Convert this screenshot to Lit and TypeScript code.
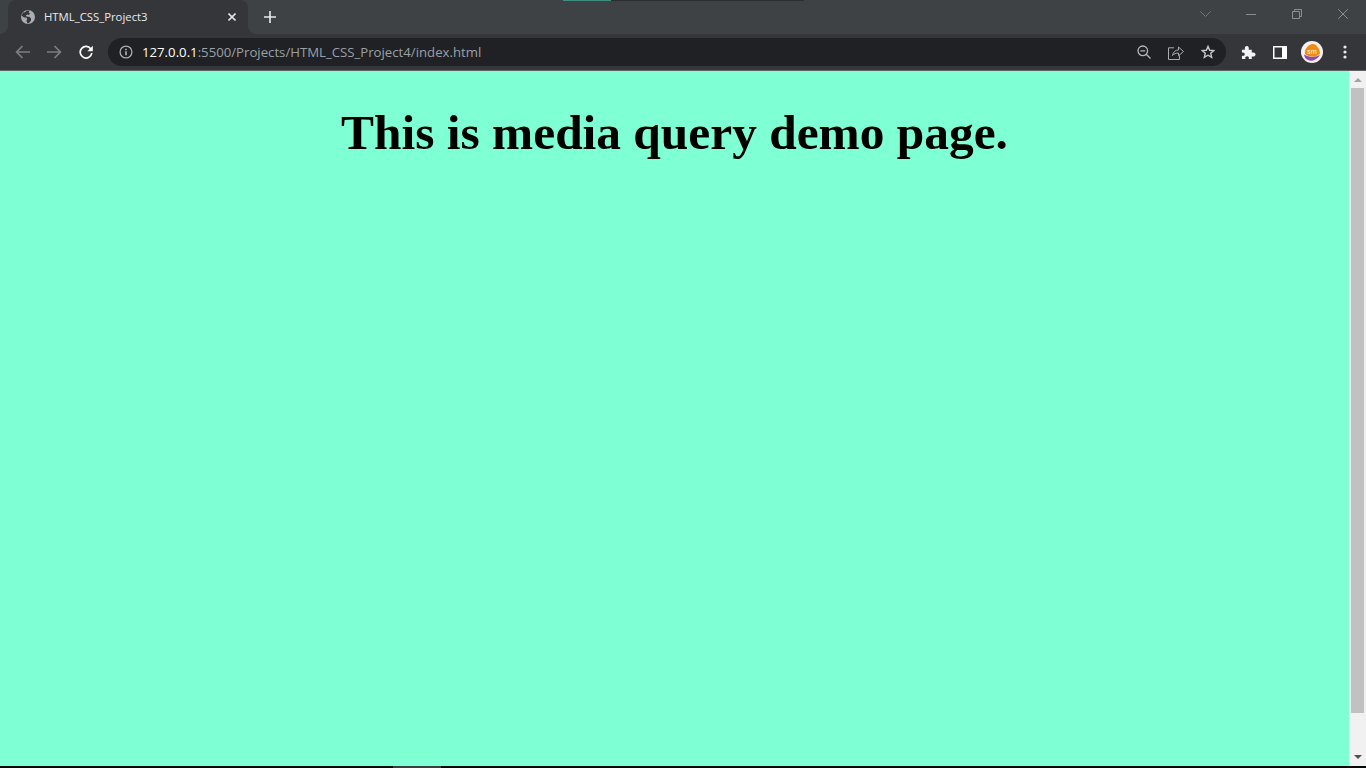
import { LitElement, css, html } from "lit";
import { customElement } from "lit/decorators.js";

@customElement("app-root")
export class AppRoot extends LitElement {
  static styles = css`
    :host {
      display: flex;
      flex-direction: column;
      width: 1366px;
      height: 768px;
      overflow: hidden;
      font-family: "Open Sans", "Liberation Sans", sans-serif;
      background: #000;
    }
    svg {
      display: block;
      flex: none;
    }

    .tabstrip {
      position: relative;
      display: flex;
      align-items: flex-end;
      height: 34px;
      flex: none;
      background: #3e4245;
    }
    .loadbar {
      position: absolute;
      top: 0;
      left: 563px;
      width: 241px;
      height: 1px;
      background: linear-gradient(to right, #3f8f80 48px, #2a2c2e 48px);
    }
    .tab {
      position: relative;
      display: flex;
      align-items: center;
      width: 240px;
      height: 34px;
      margin-left: 8px;
      padding: 0 12px 0 13px;
      box-sizing: border-box;
      background: #35363a;
      border-radius: 8px 8px 0 0;
      color: #e8eaed;
      font-size: 11.33px;
      flex: none;
    }
    .tab::before,
    .tab::after {
      content: "";
      position: absolute;
      bottom: 0;
      width: 8px;
      height: 8px;
    }
    .tab::before {
      left: -8px;
      background: radial-gradient(circle at 0 0, transparent 7.5px, #35363a 8px);
    }
    .tab::after {
      right: -8px;
      background: radial-gradient(circle at 100% 0, transparent 7.5px, #35363a 8px);
    }
    .tab-title {
      flex: 1;
      margin-left: 9px;
      margin-bottom: 1px;
      white-space: nowrap;
    }
    .newtab {
      margin-left: 16px;
      margin-bottom: 11px;
    }
    .winctl {
      display: flex;
      align-items: center;
      margin-left: auto;
      align-self: flex-start;
      height: 28px;
      padding-right: 18px;
      gap: 36px;
    }
    .winctl .chevron {
      margin-right: -1px;
    }

    .toolbar {
      display: flex;
      align-items: center;
      height: 37px;
      flex: none;
      background: #35363a;
      border-bottom: 1px solid #5f6368;
      box-sizing: border-box;
      padding-left: 15px;
    }
    .nav {
      display: flex;
      align-items: center;
      gap: 17px;
    }
    .omnibox {
      display: flex;
      align-items: center;
      width: 1118px;
      height: 28px;
      margin-left: 15px;
      padding: 0 11px;
      box-sizing: border-box;
      background: #202124;
      border-radius: 14px;
      font-size: 13.2px;
      color: #9aa0a6;
      flex: none;
    }
    .url {
      flex: 1;
      margin-left: 9px;
      white-space: nowrap;
    }
    .url b {
      font-weight: 400;
      color: #fff;
    }
    .omni-actions {
      display: flex;
      align-items: center;
      gap: 17px;
    }
    .extras {
      display: flex;
      align-items: center;
      margin-left: 15px;
    }
    .panel {
      margin-left: 17px;
    }
    .avatar {
      margin-left: 14px;
    }
    .dots {
      margin-left: 20px;
    }

    .body {
      display: flex;
      flex: none;
      height: 695px;
    }
    .page {
      flex: 1;
      background: #7fffd4;
      text-align: center;
      font-family: "Liberation Serif", "Times New Roman", serif;
      color: #000;
    }
    h1 {
      margin: 29px 0 0;
      font-size: 49.4px;
      line-height: 66px;
      font-weight: 700;
    }
    .scrollbar {
      display: flex;
      flex-direction: column;
      align-items: center;
      width: 17px;
      background: #f1f1f1;
      flex: none;
    }
    .thumb {
      width: 13px;
      height: 625px;
      background: #c1c1c1;
    }
    .arrow {
      margin: 7px 0 6px;
    }
    .arrow.down {
      margin: auto 0 7px;
    }

    .taskbar {
      flex: 1;
      background: #06090a;
    }
    .taskbar i {
      display: block;
      width: 48px;
      height: 2px;
      margin-left: 393px;
      background: #3a3d3f;
    }
  `;

  render() {
    return html`
      <div class="tabstrip">
        <div class="loadbar"></div>
        <div class="tab">
          <svg width="14" height="14" viewBox="0 0 14 14">
            <circle cx="7" cy="7" r="7" fill="#a9acb0" />
            <path
              d="M6 .6 4 2.200 2.200 2.400.5 5.600 3 7.400l2.400.2.8 1.600-.8 1.600 1.200 2.600 1.400-.4 2-2.600V8.600L8.600 7 5.600 6.400 4.800 5.200 6.600 4.400 8 5l1-1.600L7.600 2.400 8.600.8Z"
              fill="#35363a"
            />
          </svg>
          <span class="tab-title">HTML_CSS_Project3</span>
          <svg width="8" height="8" viewBox="0 0 8 8">
            <path d="M.5.5 7.500 7.500M7.500.5.5 7.500" stroke="#dfe1e5" stroke-width="1.600" fill="none" />
          </svg>
        </div>
        <svg class="newtab" width="12" height="12" viewBox="0 0 12 12">
          <path d="M6 0v12M0 6h12" stroke="#e8eaed" stroke-width="1.600" fill="none" />
        </svg>
        <div class="winctl">
          <svg class="chevron" width="11" height="6" viewBox="0 0 11 6">
            <path d="M.3.3 5.500 5.500 10.700.3" stroke="#73777a" fill="none" />
          </svg>
          <svg width="10" height="1" viewBox="0 0 10 1">
            <path d="M0 .5h10" stroke="#8b8e91" fill="none" />
          </svg>
          <svg width="10" height="10" viewBox="0 0 10 10">
            <path d="M.5 2.500h7v7h-7ZM2.500 2.500v-2h7v7h-2" stroke="#8b8e91" fill="none" />
          </svg>
          <svg width="10" height="10" viewBox="0 0 10 10">
            <path d="M.2.2l9.600 9.600M9.800.2.2 9.800" stroke="#8b8e91" fill="none" />
          </svg>
        </div>
      </div>

      <div class="toolbar">
        <div class="nav">
          <svg width="15" height="14" viewBox="0 0 15 14">
            <path d="M15 7H2M7.500 1 1.600 7l5.900 6" stroke="#7b7e82" stroke-width="1.700" fill="none" />
          </svg>
          <svg width="15" height="14" viewBox="0 0 15 14">
            <path d="M0 7h13M7.500 1l5.900 6-5.900 6" stroke="#7b7e82" stroke-width="1.700" fill="none" />
          </svg>
          <svg width="14" height="14" viewBox="0 0 14 14">
            <path d="M12 4.200A5.800 5.800 0 1 0 12.800 8" stroke="#fff" stroke-width="1.700" fill="none" />
            <path d="M13.800.8v5.400H8.400Z" fill="#fff" />
          </svg>
        </div>
        <div class="omnibox">
          <svg width="14" height="14" viewBox="0 0 14 14">
            <circle cx="7" cy="7" r="5.900" stroke="#a9acb0" stroke-width="1.300" fill="none" />
            <path d="M7 6.200v4M7 3.800v1.400" stroke="#c4c7ca" stroke-width="1.400" fill="none" />
          </svg>
          <span class="url"><b>127.0.0.1</b>:5500/Projects/HTML_CSS_Project4/index.html</span>
          <div class="omni-actions">
            <svg width="14" height="14" viewBox="0 0 14 14">
              <circle cx="5.800" cy="5.800" r="4.800" stroke="#b4b7ba" stroke-width="1.300" fill="none" />
              <path d="M9.200 9.200 13.500 13.500M3.400 5.800h4.800" stroke="#b4b7ba" stroke-width="1.300" fill="none" />
            </svg>
            <svg width="16" height="15" viewBox="0 0 16 15">
              <path d="M6 2.800H.5v11.700h11v-4" stroke="#a9acb0" fill="none" />
              <path d="M4.500 10.500C5 7 7.500 5 10.500 5V2l5 4.500-5 4.300V8C8 8 6 8.800 4.500 10.500Z" stroke="#a9acb0" fill="none" />
            </svg>
            <svg width="14" height="14" viewBox="0 0 16 16">
              <path d="M8 1.600 9.900 6l4.800.4-3.600 3.100 1.100 4.700L8 11.700l-4.200 2.500 1.100-4.700-3.600-3.100L6.100 6Z" stroke="#c4c7ca" stroke-width="1.600" fill="none" />
            </svg>
          </div>
        </div>
        <div class="extras">
          <svg width="15" height="15" viewBox="0 0 16 15">
            <path
              d="M1 4.500h3.200C3.600 2 4.600.5 6.200.5S8.800 2 8.200 4.500h3.300v3C14 7 15.500 8 15.500 9.600S14 12.200 11.500 11.700V14.500H8.300C8.800 12.500 8 11.500 6.500 11.500S4.200 12.500 4.700 14.500H1V11C3 11.500 4 10.500 4 9.300S3 7.200 1 7.700Z"
              fill="#f1f3f4"
            />
          </svg>
          <svg class="panel" width="14" height="13" viewBox="0 0 14 13">
            <path fill-rule="evenodd" d="M0 0h14v13H0ZM1.500 1.500v10H9v-10Z" fill="#fff" />
          </svg>
          <svg class="avatar" width="22" height="22" viewBox="0 0 22 22">
            <circle cx="11" cy="11" r="11" fill="#f4f1ee" />
            <path d="M3 13.500C3.500 18 8 20.500 12 19.500c3-1 6-3 7-6-3 2.500-10 3.500-16 0Z" fill="#8f4bb0" />
            <path d="M4 13C3.500 8.500 6 4.500 11 3c2.500-.5 4 .5 5.500 3 1.500 2 2.500 4 2.500 6.500-3 3.500-10 4.500-15 .5Z" fill="#f08a12" />
            <text x="11" y="13" font-size="7" font-family="Roboto, sans-serif" fill="#fff" text-anchor="middle">sm</text>
          </svg>
          <svg class="dots" width="4" height="14" viewBox="0 0 4 14">
            <circle cx="2" cy="2" r="1.600" fill="#e8eaed" />
            <circle cx="2" cy="7" r="1.600" fill="#e8eaed" />
            <circle cx="2" cy="12" r="1.600" fill="#e8eaed" />
          </svg>
        </div>
      </div>

      <div class="body">
        <main class="page"><h1>This is media query demo page.</h1></main>
        <div class="scrollbar">
          <svg class="arrow" width="8" height="4" viewBox="0 0 8 4"><path d="M4 0l4 4H0Z" fill="#a3a3a3" /></svg>
          <div class="thumb"></div>
          <svg class="arrow down" width="8" height="4" viewBox="0 0 8 4"><path d="M0 0h8L4 4Z" fill="#505050" /></svg>
        </div>
      </div>

      <div class="taskbar"><i></i></div>
    `;
  }
}
